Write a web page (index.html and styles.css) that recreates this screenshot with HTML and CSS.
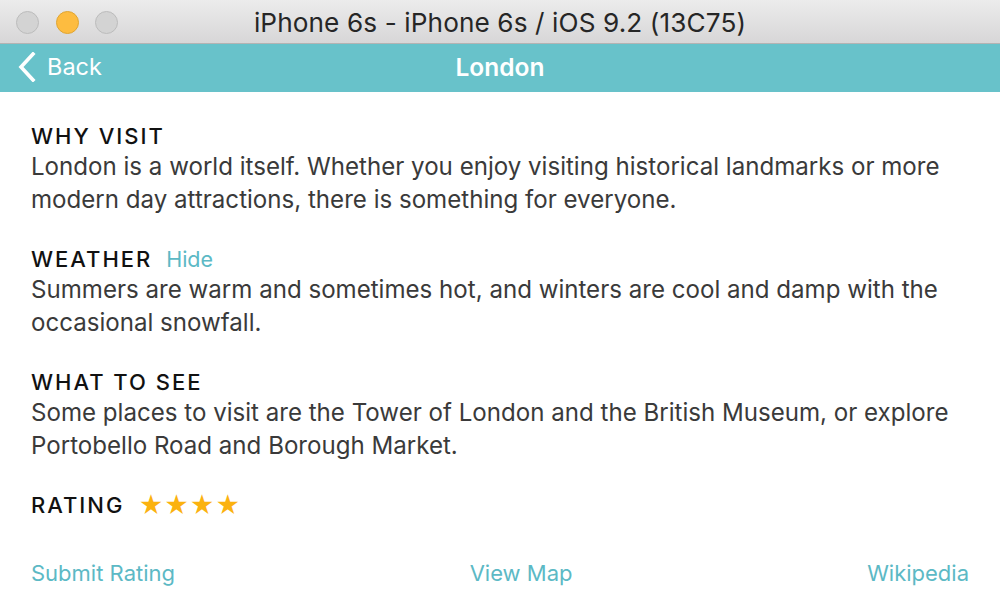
FILE: index.html
```html
<!DOCTYPE html>
<html>
<head>
<meta charset="utf-8">
<link rel="stylesheet" href="styles.css">
</head>
<body>
<div class="window">
  <div class="titlebar">
    <div class="lights">
      <span class="light"></span>
      <span class="light yellow"></span>
      <span class="light"></span>
    </div>
    <div class="wtitle">iPhone 6s - iPhone 6s / iOS 9.2 (13C75)</div>
  </div>
  <div class="nav">
    <div class="back">
      <svg class="chev" width="20" height="30" viewBox="0 0 20 30"><path d="M16 2 L4 15 L16 28" fill="none" stroke="#fff" stroke-width="3.6" stroke-linecap="square" stroke-linejoin="miter"/></svg>
      <span>Back</span>
    </div>
    <div class="ntitle">London</div>
  </div>
  <div class="content">
    <section class="sec">
      <h2 class="head">WHY VISIT</h2>
      <p class="body">London is a world itself. Whether you enjoy visiting historical landmarks or more modern day attractions, there is something for everyone.</p>
    </section>
    <section class="sec">
      <h2 class="head">WEATHER <a class="hide">Hide</a></h2>
      <p class="body">Summers are warm and sometimes hot, and winters are cool and damp with the occasional snowfall.</p>
    </section>
    <section class="sec">
      <h2 class="head">WHAT TO SEE</h2>
      <p class="body">Some places to visit are the Tower of London and the British Museum, or explore Portobello Road and Borough Market.</p>
    </section>
    <div class="rating">
      <h2 class="head">RATING</h2>
      <span class="stars">★★★★</span>
    </div>
    <div class="links">
      <a>Submit Rating</a>
      <a>View Map</a>
      <a>Wikipedia</a>
    </div>
  </div>
</div>
</body>
</html>
```
FILE: styles.css
```css
html, body { margin: 0; padding: 0; background: #fff; }
body { font-family: Inter, "Open Sans", sans-serif; width: 1000px; height: 606px; overflow: hidden; }
.window { display: flex; flex-direction: column; height: 606px; }
.titlebar {
  height: 43px; display: flex; align-items: center; justify-content: center; position: relative;
  background: linear-gradient(#ececec, #d7d6d7); border-bottom: 1px solid #b3b3b3;
}
.lights { position: absolute; left: 16px; top: 11px; display: flex; gap: 16.5px; }
.light { width: 23px; height: 23px; border-radius: 50%; background: #d3d3d3; border: 1px solid #bcbcbc; box-sizing: border-box; }
.light.yellow { background: #fdbc40; border-color: #e0a532; }
.wtitle { font-size: 26.2px; color: #262626; letter-spacing: 0.1px; padding-top: 2px; }
.nav {
  height: 48px; background: #68c2ca; display: flex; align-items: center; justify-content: center; position: relative; color: #fff;
  box-sizing: border-box; padding-bottom: 3px;
}
.back { position: absolute; left: 17px; top: 0; height: 45px; display: flex; align-items: center; gap: 10px; font-size: 23.5px; }
.chev { display: block; }
.ntitle { font-size: 24.5px; font-weight: 600; }
.content { padding: 31px 31px 0 31px; display: flex; flex-direction: column; }
.sec { margin-bottom: 30px; }
.head { margin: 0; font-size: 22px; font-weight: 500; letter-spacing: 2px; line-height: 27px; color: #111; }
.hide { font-size: 21.5px; letter-spacing: 0; color: #5cb9c5; font-weight: 400; margin-left: 6px; }
.body { margin: 0; font-size: 24.1px; line-height: 33px; color: #3a3a3a; }
.rating { display: flex; align-items: center; gap: 14px; }
.stars { color: #fbb20f; font-size: 24px; letter-spacing: 0.5px; line-height: 27px; }
.links { display: flex; justify-content: space-between; margin-top: 40px; font-size: 22px; color: #5cb9c5; line-height: 28px; }
```
